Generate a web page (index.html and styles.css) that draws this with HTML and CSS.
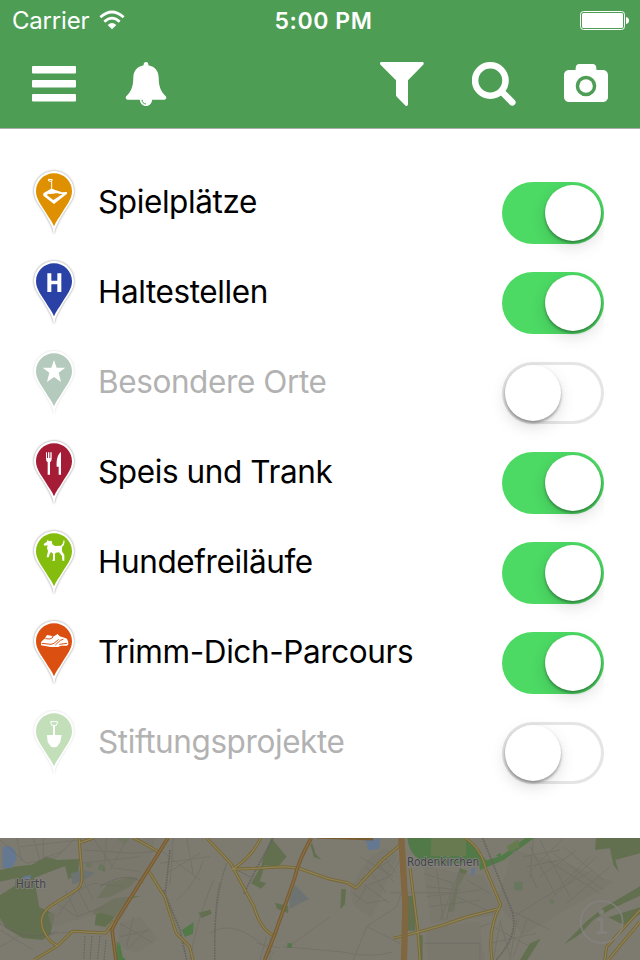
FILE: index.html
```html
<!DOCTYPE html>
<html lang="de">
<head>
    <meta charset="UTF-8">
    <meta name="viewport" content="width=device-width, initial-scale=1.0">
    <title>Karte</title>
    <link rel="stylesheet" href="styles.css">
</head>
<body>
    <svg class="defs" width="0" height="0">
        <symbol id="pin" viewBox="0 0 132 198">
            <path class="pin-edge" d="M66 6C33 6 6 33 6 67c0 27 20 45 33 68 13 22 23 38 27 60 4-22 14-38 27-60 13-23 33-41 33-68C126 33 99 6 66 6z"/>
            <path d="M66 13C36 13 12 37 12 67c0 24 17 42 29 63 10 17 19 27 25 42 6-15 15-25 25-42 12-21 29-39 29-63 0-30-24-54-54-54z"/>
        </symbol>
    </svg>
    <header>
        <div class="status">
            <div class="carrier">
                <span>Carrier</span>
                <svg width="26" height="20" viewBox="0 0 78 60">
                    <g fill="none" stroke="#fff" stroke-width="8">
                        <path d="M4 22Q39-10 74 22"/>
                        <path d="M16 35Q39 14 62 35"/>
                    </g>
                    <path fill="#fff" d="M26 45Q39 33 52 45L39 58z"/>
                </svg>
            </div>
            <div class="time">5:00 PM</div>
            <svg class="battery" width="49" height="19" viewBox="0 0 49 19">
                <rect x=".5" y=".5" width="44" height="18" rx="3" fill="none" stroke="#fff"/>
                <rect x="2" y="2" width="41" height="15" rx="1.5" fill="#fff"/>
                <path fill="#fff" d="M46 6q3 .5 3 3.500t-3 3.500z"/>
            </svg>
        </div>
        <nav>
            <!-- Menu -->
            <svg class="icon" viewBox="0 0 44 44">
                <rect y="4" width="44" height="7.500" rx="1"/>
                <rect y="18" width="44" height="7.500" rx="1"/>
                <rect y="32" width="44" height="7.500" rx="1"/>
            </svg>
            <!-- Bell -->
            <svg class="icon bell" viewBox="0 0 44 44">
                <path d="M22 0c1.500 0 2.400 1.100 2.400 3.200 6.600 1.300 10.300 6 10.300 12.600 0 9 2.500 14.500 7.300 18.700.9 1.700-.2 3.200-2 3.200H28.200c-.3 3.600-2.900 6.300-6.200 6.300s-5.900-2.700-6.200-6.300H4c-1.800 0-2.900-1.500-2-3.200 4.800-4.200 7.300-9.700 7.300-18.700 0-6.600 3.700-11.300 10.300-12.600C19.600 1.100 20.500 0 22 0z"/>
                <path class="bell-line" d="M18 37.700c.1 2.500 1.500 4.100 4 4.300"/>
            </svg>
            <!-- Filter -->
            <svg class="icon filter" viewBox="0 0 44 44">
                <path d="M1.500 0h41c1.200 0 1.700 1.600.7 2.700L28 18.300V42c0 1.800-1.400 2.500-2.700 1.400l-8.500-8.600c-.5-.5-.8-1-.8-1.800V18.300L.5 2.700C-.5 1.600 0 0 1.500 0z"/>
            </svg>
            <!-- Search -->
            <svg class="icon search" viewBox="0 0 44 44">
                <circle cx="18.300" cy="18.500" r="15.200"/>
                <path d="M30 30l10.300 10.300"/>
            </svg>
            <!-- Camera -->
            <svg class="icon camera" viewBox="0 0 44 44">
                <path fill-rule="evenodd" d="M5 8h6.500l.4-3.500c.4-1.500 1.700-2.500 3-2.500h14.200c1.300 0 2.600 1 3 2.500l.4 3.500H39c2.800 0 5 2.200 5 5v22c0 2.800-2.200 5-5 5H5c-2.800 0-5-2.200-5-5V13c0-2.800 2.200-5 5-5zm17 5.700a10.300 10.300 0 1 0 0 20.600 10.300 10.300 0 0 0 0-20.600z"/>
                <circle cx="22" cy="24" r="6.800"/>
            </svg>
        </nav>
    </header>

    <ul class="layers">
        <li>
            <svg class="pin orange" viewBox="0 0 132 198">
                <use href="#pin"/>
                <path class="glyph" fill-rule="evenodd" d="M34 73l23-14 6 2 27 9 15-1v5L66 105 34 80zm10 5l20 15 28-18-11-1c-9-4-23 3-31 0z"/>
                <path class="glyph" d="M49 70q5-9 12-10 7 3 15 8-12 10-27 2z"/>
                <path class="glyph-line" d="M59 64V37M49 31l12 1-2 5-9-1z"/>
            </svg>
            <span>Spielplätze</span>
            <div class="switch on"><i></i></div>
        </li>
        <li>
            <svg class="pin blue" viewBox="0 0 132 198">
                <use href="#pin"/>
                <path class="glyph" d="M46 43h12v22h18V43h12v56H76V76H58v23H46z"/>
            </svg>
            <span>Haltestellen</span>
            <div class="switch on"><i></i></div>
        </li>
        <li class="off">
            <svg class="pin teal" viewBox="0 0 132 198">
                <use href="#pin"/>
                <path class="glyph" d="M66 33l8 23h26L80 71l7 28-21-15-21 15 7-28-20-15h26z"/>
            </svg>
            <span>Besondere Orte</span>
            <div class="switch"><i></i></div>
        </li>
        <li>
            <svg class="pin red" viewBox="0 0 132 198">
                <use href="#pin"/>
                <path class="glyph" d="M42 40h3v17h3V40h4v17h3V40h4v19q0 8-5 11v37h-7V70q-5-3-5-11zM87 39v68h-7V83h-6c-1-23 3-36 13-44z"/>
            </svg>
            <span>Speis und Trank</span>
            <div class="switch on"><i></i></div>
        </li>
        <li>
            <svg class="pin green" viewBox="0 0 132 198">
                <use href="#pin"/>
                <path class="glyph" d="M35 45l9-6 3-7 4 5 8-2 2 11 8 5 18-1 5-6 3-10 3 1-2 12-6 8v12l7 11v17h-6l-1-14-9-11-10 1-2 4v20h-9l3-4V74l-6-5-4 6-3 10h-6l4-19-3-8 2-9-10 1z"/>
            </svg>
            <span>Hundefreiläufe</span>
            <div class="switch on"><i></i></div>
        </li>
        <li>
            <svg class="pin tomato" viewBox="0 0 132 198">
                <use href="#pin"/>
                <path class="glyph" d="M27 70q3-6 11-11l7-11 13 2 4 4 15-9 6 7 19 6q7 4 7 18l-4 4H88l-10 4H56l-29-5z"/>
                <path class="shoe-line" d="M29 73l28 3 9-3 14-12M70 78l15-14 9-3M82 76l23-3M40 59l14 1 9-5"/>
            </svg>
            <span>Trimm-Dich-Parcours</span>
            <div class="switch on"><i></i></div>
        </li>
        <li class="off">
            <svg class="pin mint" viewBox="0 0 132 198">
                <use href="#pin"/>
                <path class="glyph" d="M63 50h6v28h20l-4 21-10 14q-9 4-18 0L47 99l-2-21h18z"/>
                <path class="glyph-line" d="M56 38h21l-4 11H59z"/>
            </svg>
            <span>Stiftungsprojekte</span>
            <div class="switch"><i></i></div>
        </li>
    </ul>

    <!-- Map behind the menu -->
    <svg class="map" viewBox="0 24 1920 366">
        <g class="wood">
            <path d="M0 120l40-10 55-6 42-24 35 10 65-3-2 45-30 16-10-40-93 36 16 88 46 20-12 60-24 18-60-6-50-30L0 265v-70l45-28 2-22-47 10z"/>
            <path d="M290 205l34-45 60-18 30 2-22 25-62 32zM274 245l70-40 80-8-40 12-48 62-20 20-32-6 4-30zM595 248l36-9 4 12-30 13z"/>
            <path d="M788 86l26-62 46 56-26 30-40-4-15 48 20 6-16 16-30-16 32-54zM937 40l10 32 18 17-24-8-10-38zM825 218l40 10v22l-34-14zM1024 177h14l-3 46-14 14z"/>
            <path d="M1222 197h24v105h-24zM1258 316h10v74h-10z"/>
            <path d="M1344 246l20-70 16-62 22 8-27 46-13 76zM1690 345l68-70 50-40 112-66v28l-85 40-52 30-43 46zM1788 24h132v46l-74 20 10 35-16-20-10-50-45 5zM1825 262l95-30v20l-50 32zM1560 390l30-50 32-14-40 64z"/>
        </g>
        <g class="park">
            <path d="M1222 24h174l66 70-48 5-115 3q-70-10-77-78zM1436 100l70-24 70-52h26l-90 66-72 30z"/>
            <path d="M545 300l36-23-2 34-24 10zM350 335l10 5 8 40 10 10h-28zM258 100h16v12h-16zM300 98l20 18-6 10-22-8zM862 340h14v14h-14z"/>
            <path d="M1542 155h26v26h-26zM1488 76l14-8 2 14zM1648 206l12 4v12l-10-3z"/>
        </g>
        <g class="pale"><path d="M1294 24h104v54h-106zM1520 48l36-20 2 24-32 14zM355 24h32l-10 16-22-6z"/></g>
        <g class="built"><path d="M245 24h220L444 118l-80 150-60-20-150 44-10-40 95-72zM362 278l60-16 50 66-66 42-54-28zM1050 180l50-90 54-35 40 20-80 190-54-40zM1270 106l90 20 90 10 44 90-12 30-190 24zM1278 300l160-26 16 116h-170zM1540 60l170 46 130 50-270 160-80-100z"/></g>
        <g class="water">
            <path d="M8 50q40-12 42 38l-14 26H8zM70 140l22-6v14l-25 4zM1097 30l44-5-4 32-32 4zM1414 116l12-4-4 26-8-4z"/>
            <path class="slate" d="M212 130l40-10 32 8-20 16-46 20zM885 165l42 43-33 14-24 16-2-40z"/>
        </g>
        <g class="street">
            <path d="M0 30l80 70 90-20 60-60M50 24l15 70M100 24l20 66M130 24v60l60-20M60 50l180-20M0 300l100 60M0 350l90-50M0 270q80 70 170 40l48-6"/>
            <path d="M250 60l150 10 70-6M280 24l60 90 80 10M320 24l-10 100M380 30l-50 90M240 100l180-20M190 200l90-40 90 10M170 220l60 40 80-30M195 180l40 80M230 170l40 80M250 150l30 60M170 260l60-80"/>
            <path d="M360 280l100 60M400 260l-20 90M440 300l-60 60M360 320l90-20M480 60l120 90M500 130l100-60M520 24l-10 140M560 24l20 110M480 100l150-20M570 390q20-120 70-240M530 210q60-50 80-120"/>
            <path d="M630 310q60-40 140 20l50 40M860 355l130-95M850 350l180 16q80 20 150 0M770 340l70 14M780 390l20-70M810 390v-70M1070 220l30-50 70 50M1060 190l40 30 60-10M1080 80l100 60M1100 110l60 80M1130 95l50 60M1150 80l40 50M1090 170l80-30 30-50M1080 150l90-60M1100 290l90-60 20-60M1200 340l-100-50M1060 390l40-100M1170 188h180"/>
            <path d="M1270 130l90 30-20 110M1280 200l160-20M1290 230l150-20M1310 120l20 150M1380 120l-60 150M1370 200l110 50M1400 150l70 40M1280 170l100 10M1540 260l130-80 110-60M1590 50l80 150M1620 30l90 170M1570 80l110-20M1580 110l100-20M1600 24l-10 120M1640 90l160 100M1660 70l150 110M1690 50l120 100M1660 200l130-120M1700 220l130-110M1620 140l110-80M1680 170l90-90"/>
            <path d="M1480 290l110 60M1470 340l140-30M1500 270l30 110M1550 270l-20 120M1580 270l-40 110M1480 390l20-110M1530 240l120 60"/>
            <path d="M1270 340h170v50M1440 290l30-10M1690 24l-100 100 20 50"/>
        </g>
        <g class="rail">
            <path d="M490 180l50 120 20 90M510 60l-14 130M820 24l-50 90-40 80M1448 24l80 200q40 80-40 166"/>
            <path class="dots" d="M255 318l-4 72M276 318l-6 72M300 318l-8 72M318 330l-6 60M0 280q80 60 170 24M300 170q80-50 130-10M710 120l40 20M680 100q-40 110-35 290M660 160q-18 60-16 230"/>
        </g>
        <g class="road-edge">
            <path d="M237 24l8 100q4 45-15 55l-60 38q-80 40-20 115l22 16 45-44 100 5 26-36M172 348l-70 42M240 38l40-14M400 24q40 20 76 42M444 120l50 80 35 110 40 40 10 40M620 24l72 76 70 130q20 70 64 90M698 118q60-40 84-94M696 118l90-4 60-4 50 4M894 114l90 32 58 12 26 16 80-85 60-50M1396 24q50 36 60 90l46 110q-40 70-26 166M1260 305l70-20 70-24 100-26M1230 116l24 190 6 84M1180 325l80-20"/>
            <path d="M1920 240l-100 110-6 40M1920 275l-95 115"/>
        </g>
        <g class="road">
            <path d="M237 24l8 100q4 45-15 55l-60 38q-80 40-20 115l22 16 45-44 100 5 26-36M172 348l-70 42M240 38l40-14M400 24q40 20 76 42M444 120l50 80 35 110 40 40 10 40M620 24l72 76 70 130q20 70 64 90M698 118q60-40 84-94M696 118l90-4 60-4 50 4M894 114l90 32 58 12 26 16 80-85 60-50M1396 24q50 36 60 90l46 110q-40 70-26 166M1260 305l70-20 70-24 100-26M1230 116l24 190 6 84M1180 325l80-20"/>
            <path d="M1920 240l-100 110-6 40M1920 275l-95 115"/>
        </g>
        <g class="main-road">
            <path d="M504 24l-60 96-94 150-14 30 12 90M934 24q-40 70-50 120l-60 170-30 76M950 20l170 6"/>
            <path class="wide" d="M1204 24l12 200-4 166"/>
        </g>
        <g class="main-road-line">
            <path d="M504 24l-60 96-94 150-14 30 12 90M934 24q-40 70-50 120l-60 170-30 76"/>
        </g>
        <text x="47" y="174" textLength="91" lengthAdjust="spacingAndGlyphs">Hürth</text>
        <text x="1221" y="108" textLength="217" lengthAdjust="spacingAndGlyphs">Rodenkirchen</text>
        <g class="info">
            <circle cx="1805" cy="276" r="63"/>
            <circle class="dot" cx="1804" cy="246" r="8"/>
            <path d="M1792 268h13v40M1790 308h30"/>
        </g>
    </svg>
</body>
</html>
```
FILE: styles.css
```css
* {
    box-sizing: border-box;
}

body {
    margin: 0;
    width: 640px;
    height: 960px;
    overflow: hidden;
    background-color: #fff;
    font-family: Inter, "Liberation Sans", sans-serif;
}

.defs {
    display: none;
}

header {
    height: 129px;
    background-color: #4d9d55;
    border-bottom: 1px solid #a9aeaa;
    color: #fff;
}

/* Status bar */
.status {
    display: grid;
    grid-template-columns: 1fr auto 1fr;
    align-items: center;
    height: 40px;
    padding: 0 11px 0 12px;
    font-size: 24px;
}

.carrier {
    display: flex;
    align-items: center;
    gap: 10px;
    letter-spacing: -0.2px;
}

.time {
    margin-left: 6px;
    padding-top: 1px;
    font-size: 23px;
    font-weight: 600;
    letter-spacing: 0.6px;
}

.battery {
    justify-self: end;
}

/* Navbar */
nav {
    display: flex;
    height: 88px;
    padding: 22px 32px 0 32px;
}

.icon {
    width: 44px;
    height: 44px;
    fill: #fff;
}

.bell {
    margin-left: 48px;
}

.bell-line {
    fill: none;
    stroke: #4d9d55;
    stroke-width: 1;
}

.filter {
    margin-left: auto;
}

.search {
    margin-left: 48px;
    fill: none;
    stroke: #fff;
    stroke-width: 6.6;
    stroke-linecap: round;
}

.camera {
    margin-left: 48px;
}

/* Layer list */
.layers {
    height: 709px;
    margin: 0;
    padding: 40px 36px 0 32px;
    list-style-type: none;
}

.layers li {
    display: flex;
    align-items: flex-start;
    height: 90px;
}

.layers span {
    margin: 13px auto 0 22px;
    font-size: 31.5px;
    line-height: 40px;
    letter-spacing: -0.4px;
    color: #000;
}

.layers .off span {
    color: #b2b2b2;
}

.pin {
    width: 44px;
    height: 66px;
    filter: drop-shadow(0 0 1.2px rgba(0, 0, 0, 0.45));
}

.off .pin {
    filter: drop-shadow(0 0 1.2px rgba(0, 0, 0, 0.15));
}

.pin-edge,
.glyph {
    fill: #fff;
}

.glyph-line {
    fill: none;
    stroke: #fff;
    stroke-width: 3;
}

.shoe-line {
    fill: none;
    stroke: #db5010;
    stroke-width: 3;
}

.orange { fill: #df9000; }
.blue { fill: #2a41a5; }
.teal { fill: #b4cabc; }
.red { fill: #a51c36; }
.green { fill: #85bd0f; }
.tomato { fill: #db5010; }
.mint { fill: #c2dfba; }

/* the thumb shadow is cut at the right edge */
.switch {
    width: 102px;
    height: 62px;
    margin-top: 13px;
    padding: 3px;
    border-radius: 31px;
    box-shadow: inset 0 0 0 3px #e5e5e5;
    clip-path: inset(-20px 0 -20px -20px);
}

.switch i {
    display: block;
    width: 56px;
    height: 56px;
    border-radius: 50%;
    background-color: #fff;
    box-shadow: 0 6px 16px rgba(0, 0, 0, 0.13), 0 2px 3px rgba(0, 0, 0, 0.35);
}

.switch.on {
    background-color: #4cd964;
    box-shadow: none;
}

.switch.on i {
    margin-left: 40px;
}

/* Map */
.map {
    display: block;
    width: 640px;
    height: 122px;
    background-color: #7d7b70;
    fill: none;
    stroke-linejoin: round;
}

.wood { fill: #63704f; }
.park { fill: #527a49; }
.pale { fill: #687b50; }
.built { fill: #78756b; opacity: 0.6; }
.water { fill: #657891; }
.slate { fill: #6c7371; }

.street {
    stroke: #6d6a61;
    stroke-width: 3;
    opacity: 0.55;
}

.rail {
    stroke: #65635e;
    stroke-width: 5;
    stroke-dasharray: 5 3;
}

.rail .dots {
    stroke-width: 3;
}

.road-edge {
    stroke: #77662f;
    stroke-width: 9;
}

.road {
    stroke: #8c8259;
    stroke-width: 4;
}

.main-road {
    stroke: #785c31;
    stroke-width: 11;
}

.main-road .wide {
    stroke: #80673f;
    stroke-width: 19;
}

.main-road-line {
    stroke: #8a7047;
    stroke-width: 4;
}

.map text {
    fill: #434346;
    stroke: #858381;
    stroke-width: 5px;
    paint-order: stroke;
    font-family: "DejaVu Sans", sans-serif;
    font-size: 35px;
}

.info {
    stroke: #858382;
    stroke-width: 5;
    opacity: 0.8;
}

.info .dot {
    fill: #858382;
    stroke: none;
}

.info path {
    stroke-width: 8;
}
```
